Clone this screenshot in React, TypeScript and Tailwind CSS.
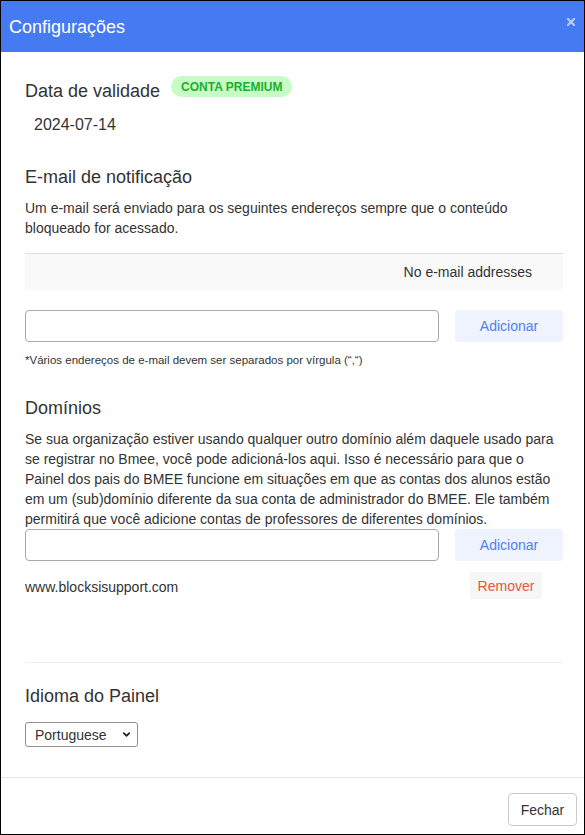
import { ChevronDown, X } from 'lucide-react'

const font = { fontFamily: '"Liberation Sans", Arial, sans-serif' }

function AddRow() {
  return (
    <div className="flex gap-4">
      <input
        type="text"
        className="h-8 flex-1 rounded-[4px] border border-[#a9a9a9] bg-white px-2 text-sm outline-none"
      />
      <button className="h-8 w-[108px] rounded-[4px] bg-[#eff3fe] text-sm text-[#4e7ff3]">
        Adicionar
      </button>
    </div>
  )
}

export default function App() {
  return (
    <div
      className="flex h-[835px] w-[585px] flex-col border border-black bg-white text-[#333]"
      style={font}
    >
      <header className="flex h-[51px] shrink-0 items-center justify-between bg-[#467af3] pl-2 pr-[7px]">
        <h1 className="text-[18px] leading-none text-white">Configurações</h1>
        <X size={12} strokeWidth={4.5} className="mb-[9px] text-[#b9cbf7]" />
      </header>

      <div className="flex-1 pl-6 pr-[21px] pt-[27px]">
        <div className="flex items-start gap-[11px]">
          <h4 className="text-[18px] leading-6">Data de validade</h4>
          <span className="-mt-[3px] flex h-[21px] items-center rounded-full bg-[#c8fcc6] px-[10px] text-[12px] font-bold text-[#19b02b]">
            CONTA PREMIUM
          </span>
        </div>
        <p className="ml-[9px] mt-[11px] text-[16px] leading-[22px]">2024-07-14</p>

        <h4 className="mt-[29px] text-[18px] leading-6">E-mail de notificação</h4>
        <p className="mt-[9px] text-sm leading-5">
          Um e-mail será enviado para os seguintes endereços sempre que o conteúdo bloqueado for
          acessado.
        </p>
        <div className="mt-[15px] flex h-[37px] items-center justify-end border-t border-[#dddddd] bg-[#f9f9f9] pr-[31px] text-sm">
          No e-mail addresses
        </div>
        <div className="mt-5">
          <AddRow />
        </div>
        <p className="mt-[10px] text-[11.5px] leading-4">
          *Vários endereços de e-mail devem ser separados por vírgula (“,“)
        </p>

        <h4 className="mt-[28px] text-[18px] leading-6">Domínios</h4>
        <p className="mt-[9px] text-sm leading-5">
          Se sua organização estiver usando qualquer outro domínio além daquele usado para se
          registrar no Bmee, você pode adicioná-los aqui. Isso é necessário para que o Painel dos
          pais do BMEE funcione em situações em que as contas dos alunos estão em um (sub)domínio
          diferente da sua conta de administrador do BMEE. Ele também permitirá que você adicione
          contas de professores de diferentes domínios.
        </p>
        <AddRow />
        <div className="mt-[11px] flex items-center justify-between pr-[21px]">
          <span className="mt-[3px] text-sm">www.blocksisupport.com</span>
          <button className="h-[27px] w-[72px] bg-[#f6f6f6] text-sm text-[#e9553d]">Remover</button>
        </div>

        <div className="mt-[63px] border-t border-[#eeeeee]" />

        <h4 className="mt-[21px] text-[18px] leading-6">Idioma do Painel</h4>
        <div className="relative mt-[14px] w-[113px]">
          <select
            defaultValue="pt"
            className="h-[25px] w-full appearance-none rounded-[3px] border border-[#8f8f8f] bg-white pl-[9px] text-sm outline-none"
          >
            <option value="pt">Portuguese</option>
            <option value="en">English</option>
          </select>
          <ChevronDown
            size={11}
            strokeWidth={4}
            className="pointer-events-none absolute right-[6px] top-[7px] text-[#222]"
          />
        </div>
      </div>

      <footer className="flex h-[57px] shrink-0 items-start justify-end border-t border-[#e5e5e5] pr-[7px] pt-[15px]">
        <button className="h-[33px] w-[69px] rounded-[4px] border border-[#cccccc] bg-white text-sm text-[#333]">
          Fechar
        </button>
      </footer>
    </div>
  )
}
